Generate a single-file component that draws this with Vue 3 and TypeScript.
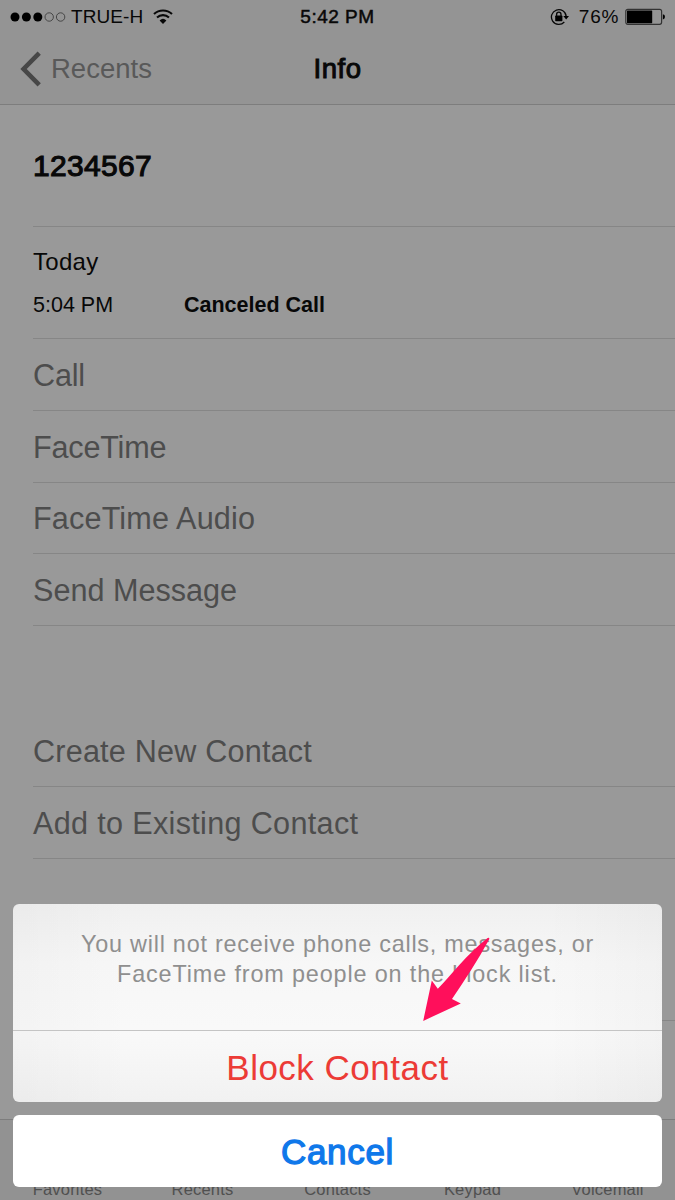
<script setup lang="ts">
interface Action {
  label: string
  cls: string
}

const callActions: Action[] = [
  { label: 'Call', cls: 'act-call' },
  { label: 'FaceTime', cls: 'act-facetime' },
  { label: 'FaceTime Audio', cls: 'act-audio' },
  { label: 'Send Message', cls: 'act-send' },
]
const contactActions: Action[] = [
  { label: 'Create New Contact', cls: 'act-create' },
  { label: 'Add to Existing Contact', cls: 'act-existing' },
]
const tabs: string[] = ['Favorites', 'Recents', 'Contacts', 'Keypad', 'Voicemail']
</script>

<template>
  <div class="screen">
    <header class="top">
      <div class="status">
        <div class="status-left">
          <svg class="signal" width="56" height="12" viewBox="0 0 56 12">
            <circle cx="5" cy="6" r="4.5" />
            <circle cx="16.4" cy="6" r="4.5" />
            <circle cx="27.8" cy="6" r="4.5" />
            <circle class="hollow" cx="39.2" cy="6" r="4.2" />
            <circle class="hollow" cx="50.6" cy="6" r="4.2" />
          </svg>
          <span class="carrier">TRUE-H</span>
          <svg class="wifi" width="20" height="16" viewBox="0 0 20 16">
            <path d="M1 5.1A13 13 0 0 1 19 5.1" />
            <path d="M4 8.5A8.8 8.8 0 0 1 16 8.5" />
            <path class="fan" d="M6.6 11.4A5 5 0 0 1 13.4 11.4L10 14.9Z" />
          </svg>
        </div>
        <span class="clock">5:42 PM</span>
        <div class="status-right">
          <svg class="lock" width="20" height="18" viewBox="0 0 20 18">
            <path class="ring" d="M14.3 14A7.4 7.4 0 1 1 16.2 8.4" />
            <path d="M13.3 8.1H19L16.2 11.6Z" />
            <rect x="5.2" y="7.6" width="7.2" height="5.6" rx="0.6" />
            <path class="shackle" d="M6.6 8.2V6.4A2.2 2.2 0 0 1 11 6.4V8.2" />
          </svg>
          <span class="percent">76%</span>
          <svg class="battery" width="41" height="18" viewBox="0 0 41 18">
            <rect class="case" x="0.8" y="1.3" width="35.8" height="15" rx="2" />
            <rect x="2" y="2.4" width="25.2" height="12.8" rx="0.6" />
            <path d="M37.9 6.2Q40 6.6 40 8.8T37.9 11.4Z" />
          </svg>
        </div>
      </div>
      <nav class="nav">
        <div class="back">
          <svg width="22" height="36" viewBox="0 0 22 36">
            <path d="M19.2 2.2L3.6 18L19.2 33.8" />
          </svg>
          <span>Recents</span>
        </div>
        <h1 class="title">Info</h1>
        <div></div>
      </nav>
    </header>

    <main class="content">
      <section class="number"><span>1234567</span></section>
      <section class="history">
        <div class="day">Today</div>
        <div class="entry">
          <span class="time">5:04 PM</span>
          <span class="kind">Canceled Call</span>
        </div>
      </section>
      <div v-for="a in callActions" :key="a.label" class="row">
        <span :class="a.cls">{{ a.label }}</span>
      </div>
      <div class="gap"></div>
      <div v-for="a in contactActions" :key="a.label" class="row">
        <span :class="a.cls">{{ a.label }}</span>
      </div>
      <div class="row tail"></div>
    </main>

    <footer class="tabs">
      <span v-for="t in tabs" :key="t" class="tab">{{ t }}</span>
    </footer>

    <div class="sheet">
      <div class="panel">
        <p class="message">
          <span class="line first">You will not receive phone calls, messages, or</span>
          <span class="line second">FaceTime from people on the block list.</span>
        </p>
        <button class="block"><span>Block Contact</span></button>
      </div>
      <button class="cancel"><span>Cancel</span></button>
    </div>

    <svg class="arrow" width="70" height="86" viewBox="0 0 70 86">
      <path d="M3.2 85.9L11.8 45.5L17.8 53.8C30 41.5 47 19 67.6 3Q69.8 2.2 69.2 4.2C58 25 45 44.5 32 64L40.8 68.4Z" />
    </svg>
  </div>
</template>

<style>
body {
  margin: 0;
  background: #999;
}
</style>

<style scoped>
.screen {
  position: relative;
  display: flex;
  flex-direction: column;
  width: 675px;
  height: 1200px;
  overflow: hidden;
  background: #999;
  color: #080808;
  font-family: "Liberation Sans", Arial, sans-serif;
  white-space: nowrap;
}
.top {
  box-sizing: border-box;
  height: 105px;
  background: #949494;
  border-bottom: 1px solid #7d7d7d;
}
.status {
  display: grid;
  grid-template-columns: 1fr auto 1fr;
  align-items: center;
  height: 34px;
}
.status-left,
.status-right {
  display: flex;
  align-items: center;
}
.status-left {
  padding-left: 10px;
}
.status-right {
  justify-content: flex-end;
  padding-right: 9px;
}
.signal .hollow {
  fill: none;
  stroke: #333;
  stroke-width: 0.8;
}
.carrier {
  margin-left: 5px;
  font-size: 19px;
  letter-spacing: 0.1px;
}
.wifi {
  margin-left: 10px;
}
.wifi path {
  fill: none;
  stroke: #080808;
  stroke-width: 2.1;
}
.wifi .fan {
  fill: #080808;
  stroke: none;
}
.clock {
  font-size: 19px;
  letter-spacing: 0.5px;
  -webkit-text-stroke: 0.5px #080808;
}
.lock .ring,
.lock .shackle {
  fill: none;
  stroke: #080808;
  stroke-width: 1.3;
}
.percent {
  margin: 0 6px 0 9px;
  font-size: 19px;
  letter-spacing: 0.7px;
}
.battery .case {
  fill: none;
  stroke: #333;
  stroke-width: 1.2;
}
.nav {
  display: grid;
  grid-template-columns: 1fr auto 1fr;
  align-items: center;
  height: 70px;
}
.back {
  display: flex;
  align-items: center;
  gap: 9px;
  padding-left: 20px;
  font-size: 27.5px;
  color: #595959;
}
.back path {
  fill: none;
  stroke: #474747;
  stroke-width: 4.6;
}
.title {
  margin: 0;
  font-size: 27.5px;
  font-weight: 400;
  letter-spacing: 0.5px;
  -webkit-text-stroke: 1px #080808;
}
.content {
  display: flex;
  flex-direction: column;
  height: 1014px;
  padding-left: 33px;
}
.number,
.history,
.row {
  box-sizing: border-box;
  border-bottom: 1px solid #868686;
}
.number {
  height: 122px;
  padding-top: 44px;
  font-size: 30px;
  line-height: 34px;
  letter-spacing: 0.3px;
  -webkit-text-stroke: 1.1px #080808;
}
.history {
  height: 112px;
  padding-top: 20px;
}
.day {
  height: 30px;
  font-size: 24px;
  line-height: 30px;
  letter-spacing: 0.3px;
}
.entry {
  display: grid;
  grid-template-columns: 151px 1fr;
  margin-top: 15px;
  font-size: 21.5px;
  line-height: 26px;
}
.kind {
  font-weight: 700;
}
.row {
  display: flex;
  align-items: center;
  height: 71.8px;
  padding-top: 2px;
  font-size: 30.6px;
  letter-spacing: 0.2px;
  color: #4d4d4d;
}
.act-call,
.act-facetime {
  letter-spacing: -0.2px;
}
.act-audio {
  letter-spacing: 0.16px;
}
.act-send {
  letter-spacing: 0;
}
.act-existing {
  letter-spacing: 0.32px;
}
.gap {
  height: 89px;
}
.tail {
  height: 162px;
}
.tabs {
  box-sizing: border-box;
  display: grid;
  grid-template-columns: repeat(5, 1fr);
  align-items: end;
  height: 81px;
  padding-bottom: 2px;
  border-top: 1px solid #7d7d7d;
  background: #929292;
}
.tab {
  text-align: center;
  font-size: 16.5px;
  line-height: 18px;
  letter-spacing: 0.2px;
  color: #505050;
}
.sheet {
  position: absolute;
  left: 13px;
  right: 13px;
  bottom: 13px;
  display: flex;
  flex-direction: column;
  gap: 13px;
}
.panel {
  height: 198px;
  border-radius: 6px;
  overflow: hidden;
  background:
    linear-gradient(90deg, rgba(0, 0, 0, 0.025), transparent 18%, transparent 82%, rgba(0, 0, 0, 0.025)),
    linear-gradient(#f0f0f0, #f7f7f7 30%, #f9f9f9 63%, #f7f7f7 75%, #f1f1f1);
}
.message {
  box-sizing: border-box;
  display: flex;
  flex-direction: column;
  align-items: center;
  height: 126px;
  margin: 0;
  padding-top: 26px;
  font-size: 23.4px;
  line-height: 29.5px;
  letter-spacing: 0.77px;
  color: #8f8f8f;
}
.second {
  letter-spacing: 0.86px;
}
.block,
.cancel {
  box-sizing: border-box;
  display: flex;
  align-items: center;
  justify-content: center;
  width: 100%;
  height: 72px;
  padding: 3px 0 0;
  border: 0;
  font-family: inherit;
  font-size: 35px;
}
.block {
  border-top: 1px solid #c4c4c4;
  background: transparent;
  letter-spacing: 0.5px;
  color: #ec3b36;
}
.cancel {
  padding-top: 1px;
  border-radius: 6px;
  background: #fff;
  letter-spacing: 0.7px;
  color: #0f78ea;
  -webkit-text-stroke: 1.3px #0f78ea;
}
.arrow {
  position: absolute;
  left: 420px;
  top: 935px;
}
.arrow path {
  fill: #ff0f5b;
}
</style>
